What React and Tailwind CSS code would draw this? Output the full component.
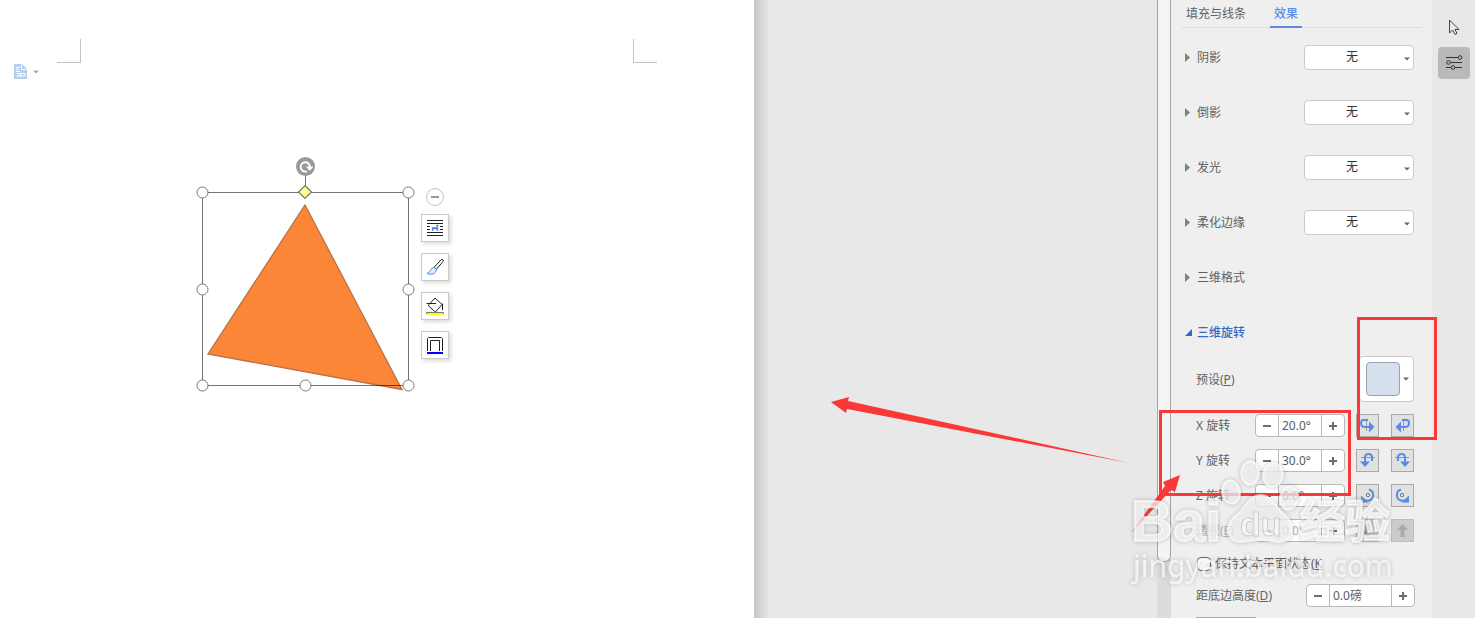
import React, { useState } from "react";

const EFFECTS = ["阴影", "倒影", "发光", "柔化边缘"];

const Caret = ({ className = "" }) => (
  <svg width="6" height="4" viewBox="0 0 6 4" className={className} aria-hidden="true">
    <path d="M0 0.5h6L3 3.5z" fill="currentColor" />
  </svg>
);

const EffectRow = ({ label }) => {
  const [value, setValue] = useState("无");

  return (
    <div className="flex h-[55px] items-center justify-between pl-3.5 pr-[18px]">
      <label htmlFor={label} className="flex items-center gap-[7px]">
        <svg width="5" height="9" viewBox="0 0 5 9" aria-hidden="true">
          <path d="M0 0L5 4.5L0 9z" fill="#7d827f" />
        </svg>
        {label}
      </label>
      <div className="relative">
        <select
          id={label}
          value={value}
          onChange={(e) => setValue(e.target.value)}
          className="block h-[25px] w-[110px] appearance-none rounded border border-[#cbcbcb] bg-white pb-0.5 pr-3.5 text-center [text-align-last:center] text-[#333] outline-none"
        >
          <option>无</option>
        </select>
        <Caret className="pointer-events-none absolute right-1 top-3 text-[#666]" />
      </div>
    </div>
  );
};

const Stepper = ({ id, initial, step = 1, suffix, disabled, wide }) => {
  const [value, setValue] = useState(initial);

  return (
    <div
      className={`flex h-[23px] overflow-hidden rounded border border-[#b9b9b9] bg-white ${
        wide ? "w-[109px]" : "w-[90px]"
      }`}
    >
      <button
        type="button"
        aria-label="减少"
        disabled={disabled}
        onClick={() => setValue(value - step)}
        className="flex w-[22px] shrink-0 items-center justify-center"
      >
        <svg width="10" height="9" viewBox="0 0 10 9">
          <path d="M1 5h8" stroke="#6e6e6e" strokeWidth="2" />
        </svg>
      </button>
      <input
        id={id}
        type="text"
        readOnly
        disabled={disabled}
        value={`${value.toFixed(1)}${suffix}`}
        className={`min-w-0 flex-1 border-x border-[#b9b9b9] px-[3px] outline-none ${
          disabled ? "text-[#b5b5b5]" : "text-[#5c5c5c]"
        }`}
      />
      <button
        type="button"
        aria-label="增加"
        disabled={disabled}
        onClick={() => setValue(value + step)}
        className="flex w-[22px] shrink-0 items-center justify-center"
      >
        <svg width="10" height="9" viewBox="0 0 10 9">
          <path d="M1 5h8M5 1v8" stroke="#6e6e6e" strokeWidth="2" />
        </svg>
      </button>
    </div>
  );
};

const BLUE = "#5a8ce6";

const GLYPHS = {
  x: (
    <>
      <path d="M9.5 4v12" stroke="#999" />
      <path d="M11 5H6.500Q4 5 4 8Q4 12 8 12H12" stroke={BLUE} strokeWidth="2" />
      <path d="M12 6.500L17.500 12L12 17.500z" fill={BLUE} />
    </>
  ),
  y: (
    <>
      <path d="M4 7.500h14" stroke="#999" />
      <path d="M8 12V7.500Q8 4 11.500 4Q15 4 15 7.500V11" stroke={BLUE} strokeWidth="2" />
      <path d="M3 11.500H13L8 17z" fill={BLUE} />
    </>
  ),
  z: (
    <>
      <circle cx="11" cy="10" r="1.700" stroke="#777" />
      <path d="M12 4.500C17.500 6 17.500 14 12 15.500C10 16 8 15.500 7 14.500" stroke={BLUE} strokeWidth="2" />
      <path d="M4 17.500V10.500L11.500 17.500z" fill={BLUE} />
    </>
  ),
  down: <path d="M10.500 17L5 11h3.500V4h4v7H16z" fill="#9c9c9c" />,
  up: <path d="M10.500 4L5 10h3.500v7h4v-7H16z" fill="#a9a9a9" />,
};

const GlyphButton = ({ glyph, mirror, disabled, label }) => (
  <button
    type="button"
    aria-label={label}
    disabled={disabled}
    className={`h-[23px] w-[23px] border ${
      disabled ? "border-[#bdbdbd] bg-[#cbcbcb]" : "border-[#a9a9a9] bg-[#e1e1e1]"
    }`}
  >
    <svg viewBox="0 0 21 21" fill="none" className={mirror ? "-scale-x-100" : ""}>
      {GLYPHS[glyph]}
    </svg>
  </button>
);

const ROTATIONS = [
  { id: "rx", label: "X 旋转", value: 20, left: "x", right: "x" },
  { id: "ry", label: "Y 旋转", value: 30, left: "y", right: "y" },
  { id: "rz", label: "Z 旋转", value: 0, left: "z", right: "z" },
  { id: "persp", label: <>透视(<u>E</u>)</>, value: 0, left: "down", right: "up", disabled: true },
];

const EffectsPanel = () => {
  const [keepFlat, setKeepFlat] = useState(false);

  return (
    <section className="w-[261px] shrink-0 overflow-hidden bg-[#efefef]">
      <nav className="ml-[11px] mr-2.5 flex h-7 items-stretch border-b border-[#dedede]">
        <button type="button" className="px-1 pt-px">填充与线条</button>
        <button
          type="button"
          className="-mb-px ml-5 border-b-2 border-[#5a8ce6] px-1 pt-0.5 font-medium text-[#5a8ce6]"
        >
          效果
        </button>
      </nav>

      <div className="pt-0.5">
        {EFFECTS.map((name) => (
          <EffectRow key={name} label={name} />
        ))}
      </div>

      <button type="button" className="flex h-[55px] items-center gap-[7px] pl-3.5">
        <svg width="5" height="9" viewBox="0 0 5 9" aria-hidden="true">
          <path d="M0 0L5 4.5L0 9z" fill="#7d827f" />
        </svg>
        三维格式
      </button>
      <button
        type="button"
        className="flex h-[51px] items-center gap-[5px] pl-3.5 pt-1 font-medium text-[#3569c4]"
      >
        <svg width="7" height="7" viewBox="0 0 7 7" aria-hidden="true">
          <path d="M7 0V7H0z" fill="currentColor" />
        </svg>
        三维旋转
      </button>

      <div className="flex items-center justify-between pl-[25px] pr-[18px]">
        <span className="pt-0.5">预设(<u>P</u>)</span>
        <button
          type="button"
          aria-label="预设"
          className="flex h-[46px] w-[55px] items-center justify-between rounded border border-[#cbcbcb] bg-white pl-1.5 pr-1 text-[#666]"
        >
          <span className="h-[34px] w-[34px] rounded border border-[#98a3ae] bg-[#d6e0ed]" />
          <Caret />
        </button>
      </div>

      <div className="mt-3 flex flex-col gap-3 pl-[25px] pr-[18px]">
        {ROTATIONS.map((r) => (
          <div key={r.id} className="flex h-[23px] items-center">
            <label htmlFor={r.id} className={`flex-1 ${r.disabled ? "text-[#b0b0b0]" : ""}`}>
              {r.label}
            </label>
            <Stepper id={r.id} initial={r.value} suffix="°" disabled={r.disabled} />
            <div className="ml-[11px] flex gap-3">
              <GlyphButton glyph={r.left} disabled={r.disabled} label="向左" />
              <GlyphButton glyph={r.right} mirror disabled={r.disabled} label="向右" />
            </div>
          </div>
        ))}
      </div>

      <label className="mt-2.5 flex h-[23px] items-center gap-1 pl-[26px]">
        <input
          type="checkbox"
          checked={keepFlat}
          onChange={(e) => setKeepFlat(e.target.checked)}
          className="h-3.5 w-3.5 appearance-none rounded-sm border border-[#666] bg-white checked:bg-[#5a8ce6]"
        />
        <span>保持文本平面状态(<u>K</u></span>
      </label>

      <div className="mt-[9px] flex h-[23px] items-center justify-between pl-[25px] pr-[17px]">
        <label htmlFor="ground">距底边高度(<u>D</u>)</label>
        <Stepper id="ground" initial={0} suffix="磅" wide />
      </div>
      <button
        type="button"
        aria-label="重置"
        className="ml-[25px] mt-2.5 block h-6 w-[60px] border border-[#a9a9a9] bg-[#e1e1e1]"
      />
    </section>
  );
};

const SideBar = () => (
  <aside className="flex w-[43px] shrink-0 flex-col items-center gap-1 bg-[#e8e8e8] pt-[11px]">
    <button type="button" aria-label="选择" className="flex h-8 w-8 items-center justify-center">
      <svg width="14" height="18" viewBox="0 0 14 18" fill="none" stroke="#444">
        <path d="M2.500 2V15L5.500 12L8 16.500L10 15.500L8 11.500H12z" />
      </svg>
    </button>
    <button
      type="button"
      aria-label="属性"
      className="flex h-8 w-8 items-center justify-center rounded bg-[#b9b9b9]"
    >
      <svg width="18" height="18" viewBox="0 0 18 18" fill="none" stroke="#333">
        <path d="M1 3.500h12M5.500 8.500H17M1 13.500h5M10 13.500h7" strokeWidth="1.200" />
        <circle cx="15" cy="3.500" r="1.800" />
        <circle cx="3.500" cy="8.500" r="1.800" />
        <circle cx="8" cy="13.500" r="1.800" />
      </svg>
    </button>
  </aside>
);

const TOOLS = [
  {
    name: "环绕方式",
    icon: (
      <>
        <path d="M1 1.500h16M1 4.500h16M1 7.500h3M14 7.500h3M1 10.500h3M14 10.500h3M1 13.500h16M1 16.500h16" stroke="#222" />
        <path d="M6.500 12V9H11M7 9.500h4.500V12M11 9V6.500h1.500" stroke="#4c86dd" strokeWidth="1.300" />
      </>
    ),
  },
  {
    name: "形状样式",
    icon: (
      <>
        <path d="M8 9.500L15 1.800C16.500 0.800 18 2 17 3.700L10.500 11" stroke="#222" fill="#fff" />
        <path d="M8 9.500C5 9.500 5.500 13 1 15.500C5 17 10 16.500 10.500 11z" stroke="#4c86dd" fill="#dceafa" />
      </>
    ),
  },
  {
    name: "填充",
    icon: (
      <>
        <path d="M3 7.500L9 1L16 7.500L9.500 15L2.500 9zM0.500 6.500H10M16.500 6.500V13" stroke="#222" />
        <path d="M0.500 17V15.500H17.500V17" stroke="#777" />
        <path d="M1 17h16" stroke="#ff0" strokeWidth="2" />
      </>
    ),
  },
  {
    name: "轮廓",
    icon: (
      <>
        <path d="M1.500 15V2.500l1-1h13l1 1V15M4.500 15V4.500h9V15" stroke="#222" />
        <path d="M1 17h16" stroke="#00f" strokeWidth="2" />
      </>
    ),
  },
];

const HANDLES = [
  [6.5, 35.5], [212.5, 35.5],
  [6.5, 132.5], [212.5, 132.5],
  [6.5, 228.5], [109.5, 228.5], [212.5, 228.5],
];

// Triangle with its selection frame, plus the floating toolbar beside it
const SelectedShape = () => (
  <>
    <svg
      width="220"
      height="236"
      viewBox="0 0 220 236"
      fill="none"
      className="absolute left-[196px] top-[157px]"
      aria-label="三角形"
    >
      <path d="M109 48L206 232.500L12 197z" fill="#fb8637" stroke="#b87246" strokeWidth="1.300" />
      <path d="M6.500 35.500H212.500V228.500H6.500zM109.500 18V35" stroke="#000" strokeOpacity="0.550" />
      {HANDLES.map(([x, y]) => (
        <circle key={`${x}-${y}`} cx={x} cy={y} r="5.500" fill="#fff" stroke="#777" />
      ))}
      <path d="M109 28.500L115.500 35L109 41.500L102.500 35z" fill="#ffff8c" stroke="#777" strokeWidth="1.200" />
      <circle cx="109.500" cy="9.500" r="9.500" fill="#999" />
      <path d="M111 14.300A4.700 4.700 0 1 1 114 10" stroke="#fff" strokeWidth="1.900" />
      <path d="M110 9.500h7.500L113.700 14z" fill="#fff" />
    </svg>
    <div className="absolute left-[421px] top-[188px] flex flex-col items-center gap-[11px]">
      <button
        type="button"
        aria-label="收起"
        className="-mb-[3px] flex h-[18px] w-[18px] items-center justify-center rounded-full border border-[#c4c4c4] bg-white"
      >
        <span className="h-0.5 w-2 bg-[#999]" />
      </button>
      {TOOLS.map((tool) => (
        <button
          key={tool.name}
          type="button"
          aria-label={tool.name}
          className="flex h-7 w-7 items-center justify-center border border-[#cacaca] bg-white shadow-[2px_2px_4px_rgba(0,0,0,0.15)]"
        >
          <svg width="18" height="18" viewBox="0 0 18 18" fill="none">
            {tool.icon}
          </svg>
        </button>
      ))}
    </div>
  </>
);

const Workspace = () => (
  <main className="flex min-w-0 flex-1 bg-[#e8e8e8]">
    <div className="relative flex-[754] bg-white">
      <span className="absolute left-[57px] top-[39px] h-6 w-6 border-b border-r border-[#c4c4c4]" />
      <span className="absolute left-[633px] top-[39px] h-6 w-6 border-b border-l border-[#c4c4c4]" />
      <button
        type="button"
        aria-label="粘贴选项"
        className="absolute left-3.5 top-16 flex items-center gap-1.5 text-[#aaa]"
      >
        <svg width="13" height="15" viewBox="0 0 13 15" fill="none">
          <path d="M0 0h8l5 5v10H0z" fill="#b8cdec" />
          <path d="M7.500 0.500V5.500h5M2 3.500h4M2 5.500h3M2 7.500h4M2.500 9.500h8.500v2.500H2.500M6.500 9.500v3.500" stroke="#fff" />
        </svg>
        <Caret />
      </button>
      <SelectedShape />
    </div>
    <div className="flex-[403]">
      <div className="h-full w-4 bg-linear-to-r from-[#c8c8c8] to-[#e8e8e8]" />
    </div>
  </main>
);

const Annotations = () => (
  <>
    <div className="pointer-events-none absolute right-[38px] top-[317px] h-[123px] w-20 border-3 border-[#fb3838]" />
    <div className="pointer-events-none absolute right-[124px] top-[410px] h-[86px] w-48 border-3 border-[#fb3838]" />
    <svg
      width="655"
      height="240"
      viewBox="820 380 655 240"
      className="pointer-events-none absolute right-0 top-[380px]"
      aria-hidden="true"
    >
      <path d="M831 402L849 397L848 401L1129 463L847 409L846 413z" fill="#fb3838" />
      <path d="M1131 533L1165 486L1163 482L1180 475L1175 492L1171 490z" fill="#fb3838" />
    </svg>
  </>
);

const Watermark = () => (
  <svg
    width="290"
    height="150"
    viewBox="1125 450 290 150"
    className="pointer-events-none absolute right-[60px] top-[450px] drop-shadow-[0_0_2px_rgba(0,0,0,0.3)]"
    fill="#fff"
    fillOpacity="0.700"
    stroke="#fff"
    strokeOpacity="0.600"
    strokeWidth="2"
    strokeLinejoin="round"
  >
    <text x="1131" y="541" className="font-['Liberation_Sans',sans-serif] text-[58px] font-bold">Bai</text>
    <ellipse cx="1231" cy="492" rx="9" ry="12" transform="rotate(-10 1231 492)" />
    <ellipse cx="1250" cy="473" rx="9" ry="12" />
    <ellipse cx="1273" cy="475" rx="10" ry="12" transform="rotate(8 1273 475)" />
    <ellipse cx="1289" cy="498" rx="9" ry="12" transform="rotate(8 1289 498)" />
    <path d="M1260 495C1248 496 1246 507 1237 514C1224 523 1225 542 1241 542C1248 542 1252 540 1260 540C1268 540 1273 543 1281 542C1296 540 1295 523 1284 514C1275 507 1273 495 1260 495z" />
    <text
      x="1240"
      y="536"
      fillOpacity="0.500"
      stroke="#b5b5b5"
      strokeWidth="1"
      className="font-['Liberation_Sans',sans-serif] text-[34px] font-bold"
    >
      du
    </text>
    <text x="1300" y="538" className="font-['Noto_Sans_CJK_SC',sans-serif] text-[45px] font-bold">经验</text>
    <text x="1133" y="577" strokeOpacity="0.200" strokeWidth="1" className="font-['Noto_Sans',sans-serif] text-[30px]">
      jingyan.baidu.com
    </text>
  </svg>
);

const App = () => {
  return (
    <div className="relative flex h-screen overflow-hidden font-['Noto_Sans','Noto_Sans_CJK_SC',sans-serif] text-xs text-[#626262]">
      <Workspace />
      <div className="w-3.5 shrink-0 bg-[#dcdcdc]">
        <div className="h-[562px] rounded-b-md border border-t-0 border-[#a5a5a5] bg-[#f4f4f4]" />
      </div>
      <EffectsPanel />
      <SideBar />
      <Annotations />
      <Watermark />
    </div>
  );
};

export default App;
